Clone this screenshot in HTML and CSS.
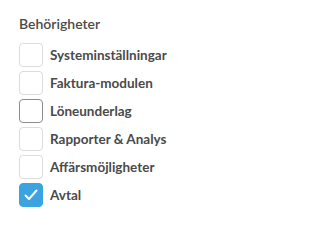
FILE: index.html
```html
<!DOCTYPE html>
<html>
<head>
<meta charset="utf-8">
<link rel="stylesheet" href="styles.css">
</head>
<body>
<div class="panel">
  <h3 class="title">Behörigheter</h3>
  <ul class="list">
    <li class="row"><span class="box"></span><span class="label">Systeminställningar</span></li>
    <li class="row"><span class="box"></span><span class="label">Faktura-modulen</span></li>
    <li class="row"><span class="box box-hover"></span><span class="label">Löneunderlag</span></li>
    <li class="row"><span class="box"></span><span class="label">Rapporter &amp; Analys</span></li>
    <li class="row"><span class="box"></span><span class="label">Affärsmöjligheter</span></li>
    <li class="row"><span class="box box-checked"><svg width="24" height="24" viewBox="0 0 24 24"><path d="M6.5 12.5 L10 16 L17.5 7.5" fill="none" stroke="#fff" stroke-width="2" stroke-linecap="round" stroke-linejoin="round"/></svg></span><span class="label">Avtal</span></li>
  </ul>
</div>
</body>
</html>
```
FILE: styles.css
```css
html, body { margin: 0; padding: 0; background: #fff; }
body { font-family: "Lato", "Liberation Sans", sans-serif; color: #4a4a4a; }
.panel { padding: 15px 0 0 19px; }
.title { margin: 0; font-size: 14px; font-weight: 600; line-height: 17px; color: #4a4a4a; }
.list { list-style: none; margin: 11px 0 0 0; padding: 0; display: flex; flex-direction: column; gap: 4px; }
.row { display: flex; align-items: center; height: 24px; }
.box { box-sizing: border-box; width: 24px; height: 24px; border: 1px solid #dcdcdc; border-radius: 4px; background: #fff; flex: none; display: flex; }
.box-hover { border-color: #8c8c8c; }
.box-checked { background: #3aa3e0; border-color: #3aa3e0; }
.box-checked svg { margin: -1px; }
.label { margin-left: 7px; font-size: 13.5px; font-weight: 700; }
```
